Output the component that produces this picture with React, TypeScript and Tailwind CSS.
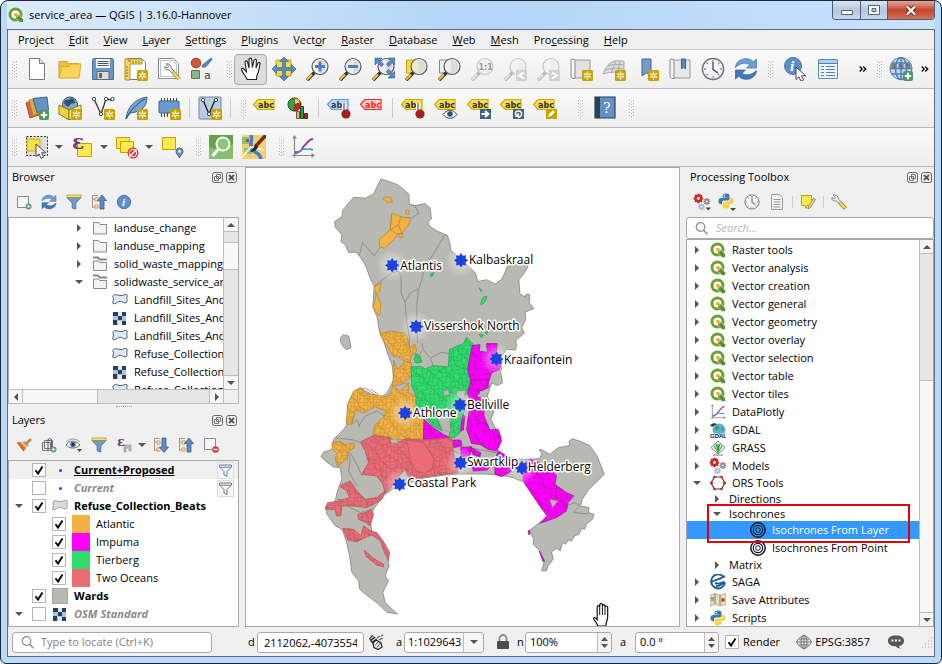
import React from "react";

type Kids = { children?: React.ReactNode };

/* ---------- small building blocks ---------- */

function Svg({ children, size = "w-6 h-6", box = "0 0 24 24" }: Kids & { size?: string; box?: string }) {
  return (
    <svg viewBox={box} className={`${size} shrink-0`} fill="none" aria-hidden="true">
      {children}
    </svg>
  );
}

function Handle({ className = "w-4" }: { className?: string }) {
  return (
    <span className={`flex shrink-0 justify-center ${className}`}>
      <svg viewBox="0 0 5 17" className="h-[17px] w-[5px]" fill="#b4b4b4" aria-hidden="true">
        {[0, 3, 6, 9, 12, 15].map((y) => (
          <g key={y}>
            <rect x="0" y={y} width="1" height="1" />
            <rect x="2" y={y + 1} width="1" height="1" />
            <rect x="4" y={y} width="1" height="1" />
          </g>
        ))}
      </svg>
    </span>
  );
}

function Sep({ className = "w-2 h-5" }: { className?: string }) {
  return (
    <span className={`flex shrink-0 justify-center ${className}`}>
      <span className="h-full w-px bg-[#cfcfcf]" />
    </span>
  );
}

function Tool({ name, children, active = false }: Kids & { name: string; active?: boolean }) {
  return (
    <button
      aria-label={name}
      className={`flex h-[31px] w-[33px] shrink-0 items-center justify-center ${
        active ? "rounded-sm border border-[#a9a9a9] bg-[#dcdcdc]" : ""
      }`}
    >
      {children}
    </button>
  );
}

function Caret() {
  return (
    <button aria-label="More options" className="flex w-3 shrink-0 justify-center">
      <Svg size="w-2 h-2" box="0 0 8 8">
        <path d="M0 2h8L4 6z" fill="#555" />
      </Svg>
    </button>
  );
}

function SmallTool({ name, children }: Kids & { name: string }) {
  return (
    <button aria-label={name} className="flex h-6 w-[25px] shrink-0 items-center justify-center">
      {children}
    </button>
  );
}

/* ---------- icon parts ---------- */

const New = () => (
  <g>
    <rect x="13" y="13" width="11" height="11" rx="1.5" fill="#c8a200" />
    <path d="M18.5 14.5v8M14.9 16.5l7.2 4M14.9 20.5l7.2-4" stroke="#fff" strokeWidth="1.400" />
    <circle cx="18.5" cy="18.5" r="1" fill="#c8a200" />
  </g>
);

const Plus = ({ x = 14, y = 14 }: { x?: number; y?: number }) => (
  <g transform={`translate(${x} ${y})`}>
    <rect width="10" height="10" rx="2" fill="#4e9a5f" />
    <path d="M5 1.800v6.400M1.800 5h6.400" stroke="#fff" strokeWidth="2" />
  </g>
);

function Lens({ children, back, faded = false }: Kids & { back?: React.ReactNode; faded?: boolean }) {
  return (
    <Svg>
      <g opacity={faded ? 0.3 : 1}>
        {back}
        <path d="M9.500 15.500 2 23" stroke="#333" strokeWidth="3.600" />
        <path d="M7 17.500 2 22.600" stroke={faded ? "#bbb" : "#f1c232"} strokeWidth="2.200" />
        <circle cx="15" cy="9.500" r="8" fill="#ececec" fillOpacity=".8" stroke="#5a5a5a" strokeWidth="1.200" />
        <path d="M15 3a6.500 6.500 0 0 1 0 13z" fill="#cfcfcf" opacity=".6" />
      </g>
      {children}
    </Svg>
  );
}

const HandIcon = () => (
  <Svg>
    <path
      d="M8 22.500c0-2-4.500-6.500-5.500-9.500-.4-1.600 1.500-2.200 2.600-.8L7.500 15 6 5.500C5.800 3.700 8 3.300 8.500 5l1.600 6L10 2.500C10 .700 12.500.700 12.700 2.500l.7 8L15 3.300c.4-1.700 2.500-1.300 2.400.4L17 11l1.800-4.600c.7-1.500 2.600-.800 2.200.8-1 4-1 8-3.200 11.500l-.3 3.800z"
      fill="#fff"
      stroke="#222"
      strokeWidth="1.100"
    />
  </Svg>
);

const Refresh = ({ size = "w-6 h-6" }: { size?: string }) => (
  <Svg size={size}>
    <path d="M1.500 10.500C1.500 4.500 8 .500 14.500 2c2 .4 3.500 1.400 4.700 2.700L22.500 2v9h-10l3.500-3.200C12 5 6 6 1.500 10.500z" fill="#6d9fd4" stroke="#3d6fa5" strokeWidth=".7" />
    <path d="M22.500 13.500c0 6-6.500 10-13 8.500-2-.4-3.500-1.400-4.700-2.700L1.500 22v-9h10L8 16.200C12 19 18 18 22.500 13.500z" fill="#4179b8" stroke="#30609a" strokeWidth=".7" />
  </Svg>
);

const Folder = ({ open = false }: { open?: boolean }) => (
  <Svg size="w-4 h-4" box="0 0 16 16">
    {open && <path d="M1 1.500h5l1.500 2H15" stroke="#888" strokeWidth="1.800" />}
    <path d={open ? "M1.500 5h5l1 1.500h7v8h-13z" : "M1.500 2.500h5L8 4.500h6.500v9.500h-13z"} fill="#f3f3f1" stroke="#8b8b8b" />
  </Svg>
);

const PolyIcon = ({ gray = false }: { gray?: boolean }) => (
  <Svg size="w-4 h-4" box="0 0 16 16">
    <path
      d="M1 4C2.500 1.800 5 3 8 3.500s5-1.800 7-.8c.8 1.300-.8 2.800 0 4.800.5 2-.5 4-2 3.500C10.500 10.500 9 8.500 6.500 9.500 5 10.500 3 12.500 1 11.500c-1-2 .8-3 .5-4.500S.500 5 1 4z"
      fill={gray ? "#dcdcdc" : "#dfe8f4"}
      stroke={gray ? "#9a9a9a" : "#4a607c"}
    />
  </Svg>
);

const RasterIcon = () => (
  <Svg size="w-4 h-4" box="0 0 16 16">
    <rect x="1" y="2" width="13" height="13" fill="#a9c3e2" />
    <path d="M1 2h5v4H1zM10 2h4v4h-4zM6 6h4v4H6zM1 10h4v5H1zM10 11h4v4h-4z" fill="#2c3e57" />
    <path d="M6 2h4v4H6zM6 11h4v4H6z" fill="#dce8f6" />
  </Svg>
);

const QLogo = () => (
  <Svg size="w-4 h-4" box="0 0 16 16">
    <circle cx="7.500" cy="7.500" r="5.500" fill="#fff" stroke="#6da033" strokeWidth="3" />
    <path d="M7.800 7.800h3.500l4.200 4.700v3h-3.600L7.800 11.200z" fill="#599032" stroke="#fff" strokeWidth=".6" />
    <path d="m6 6 4 .4-.9 1 1.800 1.800-1.500 1.500-1.800-1.800-1 .9z" fill="#f3a32b" />
  </Svg>
);

const gear = "M8 1v14M1 8h14M3 3l10 10M13 3 3 13";
const Gears = ({ menu = false }: { menu?: boolean }) => (
  <Svg size="w-[18px] h-[18px]" box="0 0 20 20">
    <g transform="scale(.75)" stroke="#cc2a2a" strokeWidth="3">
      <path d={gear} />
      <circle cx="8" cy="8" r="4.500" fill="#cc2a2a" />
    </g>
    <g transform="translate(11 5) scale(.55)" stroke="#8c8c8c" strokeWidth="3">
      <path d={gear} />
      <circle cx="8" cy="8" r="3.500" fill="#eee" />
    </g>
    <g transform="translate(5 11) scale(.55)" stroke="#a8bfe0" strokeWidth="3">
      <path d={gear} />
      <circle cx="8" cy="8" r="3.500" fill="#eee" />
    </g>
    <circle cx="6" cy="6" r="1.500" fill="#fff" />
    {menu && <path d="M14 16h6l-3 3.500z" fill="#444" />}
  </Svg>
);

const Python = ({ menu = false }: { menu?: boolean }) => (
  <Svg size={menu ? "w-[18px] h-[18px]" : "w-4 h-4"} box={menu ? "0 0 18 18" : "0 0 16 16"}>
    <path d="M8 .500C5 .500 4.500 1.500 4.500 3v1.500h4V5H3C1.500 5 .500 6 .500 8.200.500 10.500 1.500 11.200 3 11.200h1V9.500C4 8 5 7.500 6.500 7.500h3.300c1 0 1.700-.7 1.700-1.700V3c0-1.700-1-2.500-3.500-2.500z" fill="#3c78ab" />
    <path d="M8 15.500c3 0 3.500-1 3.500-2.500v-1.500h-4V11H13c1.500 0 2.500-1 2.500-3.200 0-2.300-1-3-2.500-3h-1v1.700c0 1.500-1 2-2.500 2H6.200c-1 0-1.700.7-1.700 1.700V13c0 1.700 1 2.500 3.500 2.500z" fill="#fcd24c" />
    <circle cx="6.300" cy="2.600" r=".8" fill="#fff" />
    {menu && <path d="M12 15h6l-3 3z" fill="#444" />}
  </Svg>
);

const Funnel = () => (
  <Svg size="w-4 h-4" box="0 0 16 16">
    <path d="M1 3.500h14L9.800 9v6l-3.600-1V9z" fill="#6f9ccc" stroke="#41658d" strokeWidth=".8" />
    <rect x="1" y="1" width="14" height="2.500" fill="#fce94f" stroke="#8b8440" strokeWidth=".6" />
  </Svg>
);

const Tree = ({ up = false }: { up?: boolean }) => (
  <Svg size="w-4 h-4" box="0 0 16 16">
    <path d="M1.500 2v12M1.500 5h3M1.500 13h3M1 1.500h6" stroke="#999" />
    <path d="M4 4h3v3H4zM4 11h3v3H4z" fill="#fff" stroke="#f08a24" />
    <path d={up ? "M11 1l4.500 5.500H13V15H9V6.500H6.500z" : "M11 15.500 6.500 10H9V1h4v9h2.500z"} fill="#5c8cc2" stroke="#35608f" strokeWidth=".8" />
  </Svg>
);

const Info = () => (
  <Svg size="w-4 h-4" box="0 0 16 16">
    <circle cx="8" cy="8" r="6.700" fill="#5f8fc8" stroke="#4a78ae" />
    <text x="6" y="12" fontSize="11" fontStyle="italic" fontWeight="700" fill="#fff" className="font-['Liberation_Serif',serif]">i</text>
  </Svg>
);

const Clock = ({ size = "w-6 h-6" }: { size?: string }) => (
  <Svg size={size}>
    <circle cx="12" cy="12" r="10.600" fill="#f6f6f6" stroke="#777" strokeWidth="1.500" />
    <path d="M12 3v2M12 19v2M3 12h2M19 12h2M5.600 5.600 7 7M17 17l1.400 1.400M5.600 18.400 7 17M17 7l1.400-1.400" stroke="#6a93c0" strokeWidth="1.300" />
    <path d="M12 5v7.500l5 3.500" stroke="#666" strokeWidth="1.600" />
  </Svg>
);

const Wrench = () => (
  <Svg size="w-4 h-4" box="0 0 16 16">
    <path d="M2 .8 4.500 3.200 3.500 4.800.900 3.500C.300 6 2.500 7.500 5 6.800L7.500 9 9.500 7.200 7.300 5C7.500 2.500 5 .3 2 .8z" fill="#eee" stroke="#777" strokeWidth=".8" />
    <path d="m8.500 8 6 6.500" stroke="#8e7a20" strokeWidth="4" />
    <path d="m8.500 8 5.700 6.200" stroke="#f2d760" strokeWidth="2.500" />
  </Svg>
);

const Plot = ({ size = "w-6 h-6" }: { size?: string }) => (
  <Svg size={size}>
    <path d="M3.500 1v21.500M1 20.500h22M1.800 3.500 3.500 1l1.700 2.500M20.500 18.800l2.500 1.700-2.500 1.700" stroke="#888" strokeWidth="1.200" />
    <path d="M4 17c8 1 6-4 10-7 3-3 4-6 8-6" stroke="#b0309a" strokeWidth="1.800" />
    <path d="M4 19c5-1 6-6 10-5s5-1 8 1" stroke="#4a9ab5" strokeWidth="1.600" />
  </Svg>
);

const Rings = () => (
  <Svg size="w-4 h-4" box="0 0 16 16">
    <circle cx="8" cy="8" r="7.200" stroke="#0b1a2a" strokeWidth="1.500" />
    <circle cx="8" cy="8" r="4.700" stroke="#0b1a2a" strokeWidth="1.200" />
    <circle cx="8" cy="8" r="2.300" stroke="#0b1a2a" strokeWidth="1" />
  </Svg>
);

function Tag({ color = "yellow", text = "abc", children }: Kids & { color?: string; text?: string }) {
  const fill = color === "blue" ? "#bcd9fb" : color === "red" ? "#ffd5d5" : "#f4de4c";
  const stroke = color === "blue" ? "#5c9be8" : color === "red" ? "#f22" : "#c9a90c";
  return (
    <Svg>
      <path d="M.500 8.500 5 3.500h16v10H5z" fill={fill} stroke={stroke} strokeWidth="1.200" />
      <text x={text === "ab" ? 4 : 5} y="11.500" fontSize="8" fontWeight="700" fill={color === "red" ? "#f22" : "#333"} className="font-['DejaVu_Sans']">
        {text}
      </text>
      {children}
    </Svg>
  );
}

const Pin = () => (
  <g>
    <path d="M17 7v8" stroke="#fff" strokeWidth="4" />
    <path d="M17 7v9" stroke="#777" strokeWidth="1.500" />
    <circle cx="19" cy="18" r="4.600" fill="#a32121" />
  </g>
);

const Globe = () => (
  <g>
    <circle cx="12" cy="11.500" r="11" fill="#c3d6ea" stroke="#777" />
    <path d="M2.500 7h5v4h-5zM9.500 7h5v4h-5zM16.500 7h5v4h-5z" fill="#777" />
    <path d="M12 1v21M1 11.500h22M3 6h18M3 17h18" stroke="#4b7fb8" strokeWidth="1.500" />
    <ellipse cx="12" cy="11.500" rx="5.500" ry="11" stroke="#4b7fb8" strokeWidth="1.500" />
  </g>
);

const Cursor = ({ x = 11, y = 9 }: { x?: number; y?: number }) => (
  <path d="M0 0v12.500l3-2.800 2 4.600 2.500-1.200-2-4.300h4.200z" transform={`translate(${x} ${y})`} fill="#fff" stroke="#333" strokeWidth=".9" />
);

const Chevrons = () => (
  <Svg size="w-2 h-2" box="0 0 8 8">
    <path d="m.7 1.500 2.500 2.500L.7 6.500M4.200 1.500 6.700 4 4.200 6.500" stroke="#000" strokeWidth="1.300" />
  </Svg>
);

/* ---------- toolbars ---------- */

const bar = "flex h-[39px] shrink-0 items-center overflow-hidden border-b border-[#b9b9b9] bg-linear-to-b from-[#fafafa] to-[#eeeeee]";

function ProjectBar() {
  return (
    <div className={bar} role="toolbar" aria-label="Project and navigation">
      <Handle className="w-3" />
      <Tool name="New project"><Svg><path d="M4.500 1.500h10l5 5v16h-15z" fill="#fff" stroke="#777" /><path d="M14.500 1.500v5h5" fill="#ddd" stroke="#777" /></Svg></Tool>
      <Tool name="Open project"><Svg><path d="M1 21V4.500h8l2 2h10V10" fill="#edc13c" stroke="#d6a52c" /><path d="M1 21 4 9.500h7L13 7h10l-2 14z" fill="#fbd45a" stroke="#dba92e" /></Svg></Tool>
      <Tool name="Save project">
        <Svg><path d="M2.500 1.500h19l1 1v20h-21v-20z" fill="#6b97c6" stroke="#486f9b" /><path d="M5 2h14v9H5z" fill="#f5f5f5" /><path d="M6.500 4.500h11M6.500 6.500h11M6.500 8.500h11" stroke="#555" /><path d="M6 14.500h12v8H6z" fill="#d9d9d9" stroke="#666" /><path d="M8 16h3v5H8z" fill="#486f9b" /></Svg>
      </Tool>
      <Tool name="New print layout">
        <Svg><path d="M3.500 1.500h14l4 4v17h-18z" fill="#fff" stroke="#777" /><path d="M1 2h17v5H6v16H1z" fill="#f5d76e" stroke="#b4901c" /><path d="M4 4h3M9 4v2M12 4v2M15 4v2M2 10h2M2 13h2M2 16h2M2 19h2" stroke="#8a6e10" /><New /></Svg>
      </Tool>
      <Tool name="Layout manager">
        <Svg><path d="M1.500 1.500h15l5 5v15h-20z" fill="#fff" stroke="#888" /><path d="M3.500 3.500h12l4 4v12h-16z" stroke="#a8c4e6" /><g transform="translate(7 6)"><path d="M2 .8 4.500 3.200 3.500 4.800.900 3.500C.300 6 2.500 7.500 5 6.800L8 10 10 8 7.300 5C7.500 2.500 5 .3 2 .8z" fill="#eee" stroke="#777" /><path d="m9 9 6 7" stroke="#bb9a21" strokeWidth="4" /><path d="m9 9 6 7" stroke="#f2d760" strokeWidth="2" /></g></Svg>
      </Tool>
      <Tool name="Style manager">
        <Svg><circle cx="6" cy="6" r="4.800" fill="#cd5a36" stroke="#a34020" /><path d="M12 10c0-3 2-3 3-4l6-5 1 1.500-5 6c-1 1.500-3 2-5 1.500z" fill="#5b87b9" stroke="#395e88" strokeWidth=".7" /><path d="M1.500 13.500h8v8h-8z" fill="#8db38a" stroke="#4c8051" /><text x="14" y="22" fontSize="11" fill="#444" className="font-['DejaVu_Sans']">a</text></Svg>
      </Tool>
      <Handle className="w-4 pl-[6px]" />
      <Tool name="Pan map" active><HandIcon /></Tool>
      <Tool name="Pan to selection">
        <Svg><path d="M4 3h15v16H4z" fill="#f5dc45" stroke="#c3a41e" /><path d="m12 0 4.500 4.500h-3v6h6v-3L24 12l-4.500 4.500v-3h-6v6h3L12 24l-4.500-4.500h3v-6h-6v3L0 12l4.500-4.500v3h6v-6h-3z" fill="#5a8abf" stroke="#325c8c" strokeWidth=".6" /></Svg>
      </Tool>
      <Tool name="Zoom in"><Lens><path d="M15 4.500v10M10 9.500h10" stroke="#4f80b5" strokeWidth="3" /></Lens></Tool>
      <Tool name="Zoom out"><Lens><path d="M10 9.500h10" stroke="#4f80b5" strokeWidth="3" /></Lens></Tool>
      <Tool name="Zoom full">
        <Lens><path d="M4 1h7L8.700 3.300l4 4-2.400 2.400-4-4L4 8zM24 1v7l-2.300-2.300-4 4-2.400-2.400 4-4L17 1zM24 21h-7l2.300-2.300-4-4 2.400-2.400 4 4L24 14z" fill="#5a8abf" stroke="#35608f" strokeWidth=".6" /></Lens>
      </Tool>
      <Tool name="Zoom to selection"><Lens back={<path d="M2.500 3h12v13h-12z" fill="#f5dc45" stroke="#c3a41e" />} /></Tool>
      <Tool name="Zoom to layer"><Lens back={<path d="M2.500 3h12v13h-12z" fill="#eee" stroke="#888" />} /></Tool>
      <Tool name="Zoom to native resolution"><Lens faded><text x="8.500" y="13" fontSize="8" fontWeight="700" fill="#999" className="font-['DejaVu_Sans']">1:1</text></Lens></Tool>
      <Tool name="Zoom last"><Lens faded><path d="M13 13h11v11H13z" fill="#cfd2d4" /><path d="m21 15.500-5 3 5 3" stroke="#fff" strokeWidth="2" /></Lens></Tool>
      <Tool name="Zoom next"><Lens faded><path d="M13 13h11v11H13z" fill="#cfd2d4" /><path d="m16 15.500 5 3-5 3" stroke="#fff" strokeWidth="2" /></Lens></Tool>
      <Tool name="New map view"><Svg><path d="M5 3h16v18H5z" fill="#e2e2e2" stroke="#999" /><path d="M2 2.500c3-1 4 0 4 2v17H4c-1 0-2-1-2-3z" fill="#f4f4f4" stroke="#888" /><New /></Svg></Tool>
      <Tool name="New 3D map view"><Svg><path d="M10 5c4-2 7-1 12-1v13c-8-3-14-2-21 0 2-5 4-9 9-12z" fill="#ddd" stroke="#aaa" /><path d="M6 9c5-2 10-2 16-1M3 13c6-2 12-2 19-1M14 4 9 16M18 4l-2 12" stroke="#aaa" /><New /></Svg></Tool>
      <Tool name="New spatial bookmark"><Svg><path d="M7 2h9v17l-4.500-3L7 19z" fill="#6f9ccc" stroke="#41658d" /><New /></Svg></Tool>
      <Tool name="Show bookmarks"><Svg><path d="M5 3h17v18H5z" fill="#e8e8e8" stroke="#999" /><path d="M2 2.500c3-1 4 0 4 2v17H4c-1 0-2-1-2-3z" fill="#f4f4f4" stroke="#888" /><path d="M13.500 2h4v10l-2-2-2 2z" fill="#5a8abf" stroke="#35608f" /></Svg></Tool>
      <Tool name="Temporal controller"><Clock /></Tool>
      <Tool name="Refresh"><Refresh /></Tool>
      <Handle />
      <Tool name="Identify features"><Svg><circle cx="10" cy="9" r="8.500" fill="#5f8fc8" stroke="#4a78ae" /><text x="7" y="14" fontSize="15" fontStyle="italic" fontWeight="700" fill="#fff" className="font-['Liberation_Serif',serif]">i</text><Cursor x={13} y={10} /></Svg></Tool>
      <Tool name="Open attribute table"><Svg><path d="M2.500 2.500h19v19h-19z" fill="#eef4fb" stroke="#5a8abf" /><path d="M3 3h18v3.500H3z" fill="#a9d0f5" /><path d="M5 9.500h3M10 9.500h9M5 12.500h3M10 12.500h9M5 15.500h3M10 15.500h9M5 18.500h3M10 18.500h9M3 6.500h18" stroke="#4f7fb3" /></Svg></Tool>
      <button aria-label="More tools" className="ml-[10px] flex w-[18px] shrink-0 justify-center"><Chevrons /></button>
      <Handle className="w-[14px]" />
      <button aria-label="Add web layer" className="flex w-[30px] shrink-0 justify-center"><Svg><Globe /><Plus x={14} y={14} /></Svg></button>
      <button aria-label="More layers" className="flex w-[18px] shrink-0 justify-center"><Chevrons /></button>
    </div>
  );
}

function LayerBar() {
  return (
    <div className={bar} role="toolbar" aria-label="Data sources and labels">
      <Handle className="w-3" />
      <Tool name="Data source manager"><Svg><path d="m1 7 7-3 6 15-9 3z" fill="#d8683a" stroke="#8f3c1a" strokeWidth=".8" /><path d="m4 4 9-2 5 14-10 4z" fill="#e0a83c" stroke="#a67c1c" strokeWidth=".8" /><path d="m8 2.500 14-1.500 1.500 13L12 16.500z" fill="#6492c6" stroke="#3d668f" /><Plus /></Svg></Tool>
      <Tool name="New geopackage layer"><Svg><circle cx="12" cy="8.500" r="7.500" fill="#7fa8d4" stroke="#36506f" /><path d="M6 6c2-4 5-1 6-3s5 0 5 3-4 0-5 3-6 0-6-3z" fill="#31506f" /><path d="M1 9v9l10 6V14z" fill="#f2d33a" stroke="#8b7412" /><path d="M23 9v9l-12 6V14z" fill="#fff07a" stroke="#8b7412" /><New /></Svg></Tool>
      <Tool name="New shapefile layer"><Svg><path d="m3 3 7 15 5-15 6 1" stroke="#333" strokeWidth="1.300" /><g fill="#fff" stroke="#444"><circle cx="3" cy="3" r="1.700" /><circle cx="10" cy="18" r="1.700" /><circle cx="15" cy="3" r="1.700" /><circle cx="21.500" cy="3" r="1.700" /></g><New /></Svg></Tool>
      <Tool name="New SpatiaLite layer"><Svg><path d="M2 23C3 12 10 3 23 1c0 9-5 15-17 16z" fill="#7ba6d4" stroke="#3d668f" /><path d="M2 23C6 15 12 8 21 3" stroke="#244a70" /><New /></Svg></Tool>
      <Tool name="New temporary scratch layer"><Svg><path d="M4.500 2v19M7.500 2v19M10.500 2v19M13.500 2v19M16.500 2v19M19.500 2v19" stroke="#444" /><rect x="2" y="5" width="20" height="12" rx="1" fill="#6d9ace" stroke="#3b6594" /><New /></Svg></Tool>
      <Sep />
      <Tool name="New virtual layer"><Svg><rect x="1" y="1" width="22" height="22" rx="1" fill="#b8cce3" stroke="#6d87a6" /><path d="m5 4 6 14 6-14" stroke="#222" strokeWidth="1.400" /><g fill="#fff" stroke="#444"><circle cx="5" cy="4" r="1.700" /><circle cx="11" cy="18" r="1.700" /><circle cx="18" cy="4" r="1.700" /></g><New /></Svg></Tool>
      <Sep />
      <Handle className="w-[14px] pl-1" />
      <Tool name="Layer labeling"><Tag /></Tool>
      <Tool name="Layer diagrams"><Svg><circle cx="8.500" cy="8.500" r="6.500" fill="#31a54a" stroke="#2b4a20" /><path d="M8.500 8.500V2a6.500 6.500 0 0 1 6 5z" fill="#f5d23c" stroke="#544" strokeWidth=".7" /><path d="M8.500 8.500 14.700 7a6.500 6.500 0 0 1-7.200 8z" fill="#d3201f" stroke="#544" strokeWidth=".7" /><path d="M10.500 15.500h3v7h-3z" fill="#f0b42a" stroke="#654" /><path d="M14.500 10.500h3v12h-3z" fill="#21a544" stroke="#242" /><path d="M18.500 17.500h3v5h-3z" fill="#c22" stroke="#522" /></Svg></Tool>
      <Sep />
      <Tool name="Highlight pinned labels"><Tag color="blue" text="ab"><Pin /></Tag></Tool>
      <Tool name="Toggle unplaced labels"><Tag color="red" /></Tool>
      <Sep />
      <Tool name="Pin labels"><Tag text="ab"><Pin /></Tag></Tool>
      <Tool name="Show and hide labels"><Tag><path d="M9 18.500c4-5.500 10-5.500 14 0-4 5-10 5-14 0z" fill="#fff" stroke="#445" /><circle cx="16" cy="18" r="2.800" fill="#31557c" /></Tag></Tool>
      <Tool name="Move label"><Tag><path d="M13 13h11v10H13z" fill="#41627f" /><path d="M14.500 18h6M18 15l3.500 3-3.500 3" stroke="#fff" strokeWidth="2" /></Tag></Tool>
      <Tool name="Rotate label"><Tag><path d="M13 13h11v10H13z" fill="#41627f" /><path d="M18 21.500c5-1 4.500-6.500.5-6.500s-4 4-1 4.500M18 17l.5 3-3 .5" stroke="#fff" strokeWidth="1.400" /></Tag></Tool>
      <Tool name="Change label"><Tag><path d="M13 13h11v10H13z" fill="#c8a200" /><path d="m15 21 1-3 4-4 2 2-4 4z" fill="#fff" /></Tag></Tool>
      <Handle className="ml-3 w-[15px]" />
      <Tool name="Help"><Svg><path d="M2 1h20v21H2z" fill="#6290c4" stroke="#2b3f57" strokeWidth="1.200" /><path d="M2 1h5v21H2z" fill="#2b3f57" /><text x="10" y="17" fontSize="14" fill="#fff" className="font-['DejaVu_Serif']">?</text></Svg></Tool>
      <Handle className="w-5" />
    </div>
  );
}

function SelectionBar() {
  return (
    <div className={bar} role="toolbar" aria-label="Selection and plugins">
      <Handle className="w-3" />
      <Tool name="Select features"><Svg><path d="M1.500 1.500h21v19h-21z" fill="#ddd" stroke="#333" strokeDasharray="2 1.500" /><path d="M2 4h13v12H2z" fill="#f9e04a" stroke="#cbaa1c" /><Cursor x={11} y={9} /></Svg></Tool>
      <Caret />
      <Tool name="Select by expression"><Svg><path d="M7.500 8.500h14v13h-14z" fill="#fce94f" stroke="#c4a000" /><text x="2" y="14" fontSize="20" fontWeight="700" fill="#6b3f76" className="font-['DejaVu_Serif',serif]">ε</text></Svg></Tool>
      <Caret />
      <Tool name="Deselect features"><Svg><path d="M1.500 2.500h13v11h-13z" fill="#fce94f" stroke="#c4a000" /><path d="M5.500 6.500h13v11h-13z" fill="#fce94f" stroke="#c4a000" /><circle cx="18" cy="18" r="5.500" fill="#d33" /><path d="m14.500 21.500 7-7" stroke="#fff" strokeWidth="1.600" /><circle cx="18" cy="18" r="3.700" stroke="#fff" /></Svg></Tool>
      <Caret />
      <Tool name="Select by location"><Svg><path d="M2.500 2.500h13v12h-13z" fill="#fce94f" stroke="#c4a000" /><path d="M19.500 23c-1-3-3.500-4-3.500-6.500a3.500 3.500 0 0 1 7 0c0 2.500-2.500 3.500-3.500 6.500z" fill="#6f93b4" stroke="#48637f" /><circle cx="19.500" cy="16.500" r="1.200" fill="#fff" /></Svg></Tool>
      <Handle className="w-4 pl-[5px]" />
      <Tool name="Search layers"><Svg><path d="M0 0h24v24H0z" fill="#61a548" /><path d="M0 12C8 16 18 14 24 9v15H0z" fill="#86c06e" /><circle cx="14" cy="9" r="6.500" fill="#8cc47a" stroke="#fff" strokeWidth="2" /><path d="m9.500 14-6 7" stroke="#fff" strokeWidth="3" /></Svg></Tool>
      <Tool name="Quick OSM"><Svg><path d="M0 0h24v24H0z" fill="#f5cf6e" /><path d="M0 2h7v7H0zM2 13h8v6H2z" fill="#8cc06c" /><path d="M9 0c2 6-2 9 1 14s8 3 9 10" stroke="#3a7fd0" strokeWidth="3.500" /><path d="M0 22 9 12l13 3" stroke="#f7f2d0" strokeWidth="2" /><path d="M4 4h3v3H4z" fill="#d4356a" /><path d="M24 0 13 12" stroke="#6e3013" strokeWidth="3.500" /><path d="m14 10-6 7c3 0 6-1 8-5z" fill="#222" /></Svg></Tool>
      <Handle className="w-4 pl-[6px]" />
      <Tool name="DataPlotly"><Plot /></Tool>
    </div>
  );
}

/* ---------- docks ---------- */

function DockTitle({ title }: { title: string }) {
  return (
    <div className="flex h-5 shrink-0 items-center gap-[3px] pr-[2px] pl-1">
      <h2 className="mr-auto whitespace-nowrap">{title}</h2>
      <button aria-label={`Float ${title}`}>
        <Svg size="w-[11px] h-[11px]" box="0 0 11 11">
          <rect x=".5" y=".5" width="10" height="10" rx="2" stroke="#666" />
          <path d="M4.500 2.500h4v4h-4zM2.500 4.500h4v4h-4z" fill="#f0f0f0" stroke="#666" strokeWidth=".9" />
        </Svg>
      </button>
      <button aria-label={`Close ${title}`}>
        <Svg size="w-[11px] h-[11px]" box="0 0 11 11">
          <rect x=".5" y=".5" width="10" height="10" rx="2" stroke="#666" />
          <path d="m3 3 5 5M8 3 3 8" stroke="#555" strokeWidth="1.800" />
        </Svg>
      </button>
    </div>
  );
}

function Arrow({ open = false }: { open?: boolean }) {
  return (
    <Svg size="w-2 h-2" box="0 0 8 8">
      <path d={open ? "M0 2h8L4 6z" : "M2 0v8l4-4z"} fill="#555" />
    </Svg>
  );
}

function ScrollEnd({ dir, className }: { dir: "up" | "down" | "left" | "right"; className: string }) {
  const d = { up: "M0 6h8L4 2z", down: "M0 2h8L4 6z", left: "M6 0v8L2 4z", right: "M2 0v8l4-4z" }[dir];
  return (
    <button aria-label={`Scroll ${dir}`} className={`flex shrink-0 items-center justify-center border-[#bcbcbc] bg-[#f5f5f5] ${className}`}>
      <Svg size="w-2 h-2" box="0 0 8 8"><path d={d} fill="#555" /></Svg>
    </button>
  );
}

const browserRows: { label: string; kind: "folder" | "open" | "poly" | "raster"; arrow?: boolean; open?: boolean }[] = [
  { label: "landuse_change", kind: "folder", arrow: true },
  { label: "landuse_mapping", kind: "folder", arrow: true },
  { label: "solid_waste_mapping", kind: "open", arrow: true },
  { label: "solidwaste_service_area", kind: "open", arrow: true, open: true },
  { label: "Landfill_Sites_And_Drop", kind: "poly" },
  { label: "Landfill_Sites_And_Drop", kind: "raster" },
  { label: "Landfill_Sites_And_Drop", kind: "poly" },
  { label: "Refuse_Collection_Beats", kind: "poly" },
  { label: "Refuse_Collection_Beats", kind: "raster" },
  { label: "Refuse_Collection_Beats", kind: "poly" },
];

const dockTools = "flex h-[30px] shrink-0 items-center pl-[3px]";

function Browser() {
  return (
    <section className="flex min-h-0 shrink-0 flex-col">
      <DockTitle title="Browser" />
      <div className={dockTools} role="toolbar" aria-label="Browser tools">
        <SmallTool name="Add layer"><Svg size="w-4 h-4" box="0 0 16 16"><path d="M1.500 2.500h11v11h-11z" fill="#f5f5f5" stroke="#888" /><circle cx="12.500" cy="12.500" r="3" fill="#5da56c" /><path d="M12.500 11v3M11 12.500h3" stroke="#fff" /></Svg></SmallTool>
        <SmallTool name="Refresh browser"><Refresh size="w-4 h-4" /></SmallTool>
        <SmallTool name="Filter browser"><Funnel /></SmallTool>
        <SmallTool name="Collapse all"><Tree up /></SmallTool>
        <SmallTool name="Properties"><Info /></SmallTool>
      </div>
      <div className="flex h-[172px] border border-b-0 border-[#a9a9a9] bg-white">
        <ul className="min-w-0 flex-1 overflow-hidden pt-px">
          {browserRows.map((r, i) => (
            <li key={i} className={`flex h-[18px] items-center whitespace-nowrap ${r.arrow ? "pl-[66px]" : "pl-[103px]"}`}>
              {r.arrow && <span className="flex w-[17px] shrink-0"><Arrow open={r.open} /></span>}
              {r.kind === "poly" ? <PolyIcon /> : r.kind === "raster" ? <RasterIcon /> : <Folder open={r.kind === "open"} />}
              <span className="ml-[6px]">{r.label}</span>
            </li>
          ))}
        </ul>
        <div className="flex w-[15px] shrink-0 flex-col border-l border-[#bcbcbc] bg-[#e6e6e6]">
          <ScrollEnd dir="up" className="h-[14px] border-b" />
          <div className="mt-[10px] h-[28px] border-y border-[#bcbcbc] bg-[#f8f8f8]" />
          <ScrollEnd dir="down" className="mt-auto h-[14px] border-t" />
        </div>
      </div>
      <div className="flex h-[15px] border border-[#bcbcbc] bg-[#e6e6e6]">
        <ScrollEnd dir="left" className="w-[14px] border-r" />
        <div className="w-[75px] border-r border-[#bcbcbc] bg-[#f8f8f8]" />
        <ScrollEnd dir="right" className="ml-auto w-[14px] border-l" />
        <span className="w-[15px] border-l border-[#bcbcbc] bg-[#f0f0f0]" />
      </div>
    </section>
  );
}

function Check({ label, on = false }: { label: string; on?: boolean }) {
  return (
    <span className="grid h-[14px] w-[14px] shrink-0">
      <input type="checkbox" aria-label={label} defaultChecked={on} className="peer h-[14px] w-[14px] appearance-none border border-[#b5b5b5] bg-white [grid-area:1/1]" />
      <svg viewBox="0 0 14 14" className="pointer-events-none hidden h-[14px] w-[14px] [grid-area:1/1] peer-checked:block" fill="none" aria-hidden="true">
        <path d="M3.500 7.200 6 10.500 10.500 3.500" stroke="#000" strokeWidth="1.900" />
      </svg>
    </span>
  );
}

function LayerRow({ label, on, arrow, indent = false, style = "", icon, filter, shade = false }: {
  label: string; on: boolean; arrow?: boolean; indent?: boolean; style?: string; icon: React.ReactNode; filter?: string; shade?: boolean;
}) {
  return (
    <li className={`flex h-[18px] items-center whitespace-nowrap pr-1 ${shade ? "bg-[#f0f0f0]" : ""} ${indent ? "pl-[43px]" : "pl-[6px]"}`}>
      {!indent && <span className="flex w-[17px]">{arrow && <Arrow open />}</span>}
      <Check label={label} on={on} />
      <span className={`flex w-[18px] shrink-0 items-center justify-center ${indent ? "mx-[6px]" : "mx-[5px]"}`}>{icon}</span>
      <span className={`mr-auto ${style}`}>{label}</span>
      {filter && (
        <button aria-label={`Filter ${label}`} className="flex h-[17px] w-[17px] items-center justify-center border border-[#ddd] bg-[#f5f5f5]">
          <Svg size="w-[13px] h-[13px]" box="0 0 13 13"><path d="M.500 1h12v2L8 7.500v5L5 11V7.500L.500 3zM1 3.200h11" stroke={filter} /></Svg>
        </button>
      )}
    </li>
  );
}

const dot = <span className="h-[3px] w-[3px] rounded-full bg-[#2347e0]" />;

function Layers() {
  return (
    <section className="flex min-h-0 flex-1 flex-col">
      <DockTitle title="Layers" />
      <div className={dockTools} role="toolbar" aria-label="Layer tools">
        <SmallTool name="Layer styling"><Svg size="w-4 h-4" box="0 0 16 16"><path d="m10 7 5-5" stroke="#c98a35" strokeWidth="2.500" /><path d="M1 5.500 7 5l4 4-3.500 5z" fill="#f3c64a" stroke="#c9982c" strokeWidth=".6" /><path d="m1 6 2.500-1 6 6-2 3.500z" fill="#e0603c" /><path d="m7 5 2-1 4 4-2 1.500z" fill="#8fa0c8" /></Svg></SmallTool>
        <SmallTool name="Add group"><Svg size="w-4 h-4" box="0 0 16 16"><path d="M1.500 5.500h8v8h-8zM3.500 3.500h8v8h-8z" fill="#eee" stroke="#777" /><path d="M7 13V2.500q2-2 3.500 0V12" stroke="#558" /><circle cx="12.500" cy="12.500" r="3" fill="#5da56c" /><path d="M12.500 11v3M11 12.500h3" stroke="#fff" /></Svg></SmallTool>
        <SmallTool name="Map themes"><Svg size="w-[18px] h-4" box="0 0 18 16"><path d="M1 8C4 3 11 3 15 8c-4 4-10 4-14 0z" fill="#fff" stroke="#666" /><path d="M1 5C5 1 11 1 15 5" stroke="#999" /><circle cx="8" cy="7.500" r="2.800" fill="#4272a8" /><circle cx="8" cy="7.500" r="1.200" fill="#123" /><path d="M12 12h5l-2.500 3z" fill="#444" /></Svg></SmallTool>
        <SmallTool name="Filter legend"><Funnel /></SmallTool>
        <SmallTool name="Filter by expression"><Svg size="w-4 h-4" box="0 0 16 16"><text x="1" y="9" fontSize="13" fontWeight="700" fill="#6b3f76" className="font-['DejaVu_Serif',serif]">ε</text><path d="M8 8h7v6h-2v-3h-3v4H8z" fill="#bbb" stroke="#999" strokeWidth=".7" /></Svg></SmallTool>
        <Caret />
        <SmallTool name="Expand all"><Tree /></SmallTool>
        <SmallTool name="Collapse layers"><Tree up /></SmallTool>
        <SmallTool name="Remove layer"><Svg size="w-4 h-4" box="0 0 16 16"><path d="M1.500 1.500h11v11h-11z" fill="#f5f5f5" stroke="#888" /><circle cx="12.500" cy="12.500" r="3.300" fill="#dc3a3a" /><path d="M10.500 12.500h4" stroke="#fff" strokeWidth="1.400" /></Svg></SmallTool>
      </div>
      <ul className="min-h-0 flex-1 overflow-hidden border border-[#a9a9a9] bg-white">
        <LayerRow label="Current+Proposed" on style="font-bold underline" icon={dot} filter="#5c7fa8" shade />
        <LayerRow label="Current" on={false} style="font-bold italic text-[#8a8a8a]" icon={dot} filter="#777" />
        <LayerRow label="Refuse_Collection_Beats" on arrow style="font-bold" icon={<PolyIcon gray />} />
        <LayerRow label="Atlantic" on indent icon={<span className="h-[18px] w-[18px] bg-[#f2b142]" />} />
        <LayerRow label="Impuma" on indent icon={<span className="h-[18px] w-[18px] bg-[#ff00ff]" />} />
        <LayerRow label="Tierberg" on indent icon={<span className="h-[18px] w-[18px] bg-[#2edb6c]" />} />
        <LayerRow label="Two Oceans" on indent icon={<span className="h-[18px] w-[18px] bg-[#ed6b75]" />} />
        <LayerRow label="Wards" on style="font-bold" icon={<span className="h-4 w-4 border border-[#a5a69f] bg-[#b8b9b2]" />} />
        <LayerRow label="OSM Standard" on={false} arrow style="font-bold italic text-[#8a8a8a]" icon={<RasterIcon />} />
      </ul>
    </section>
  );
}

const Gdal = () => (
  <Svg size="w-4 h-4" box="0 0 16 16">
    <circle cx="9" cy="8" r="6.500" fill="#5ab0e0" />
    <path d="M5 5c3-3 5 0 4 2S5 9 5 5zM11 4l3 3-2 2z" fill="#4a9d4c" />
    <path d="M0 3l4-2 3 1-5 3z" fill="#333" />
    <text x="0" y="15.500" fontSize="6" fontWeight="700" fill="#111" stroke="#fff" strokeWidth="1" paintOrder="stroke" className="font-['Liberation_Sans_Narrow','Liberation_Sans',sans-serif]">GDAL</text>
  </Svg>
);
const Grass = () => (
  <Svg size="w-4 h-4" box="0 0 16 16"><path d="m8 1 7 6.500L8 14 1 7.500z" fill="#f5f5f5" stroke="#777" /><path d="M8 13V4M8 12 4 6M8 12l4-6M8 10 6 4M8 10l2-6" stroke="#36a844" strokeWidth="1.300" /><path d="M3 15h10" stroke="#777" /></Svg>
);
const Ors = () => (
  <Svg size="w-4 h-4" box="0 0 16 16"><path d="M4.500 2h7L15 8l-3.500 6h-7L1 8z" stroke="#444" strokeWidth="1.200" /><g fill="#e01b1b"><circle cx="4.500" cy="2" r="1.300" /><circle cx="11.500" cy="2" r="1.300" /><circle cx="14.500" cy="8" r="1.500" /><circle cx="11.500" cy="14" r="1.300" /><circle cx="4.500" cy="14" r="1.300" /><circle cx="1.500" cy="8" r="1.500" /></g></Svg>
);
const Saga = () => (
  <Svg size="w-4 h-4" box="0 0 16 16"><path d="M14 3.500A7 7 0 1 0 15 9M1 8.500C5 5 8 7 15 2M6 12c4 1 5-2 9-4M5 9c3 1 3 1 9-1" stroke="#1d5a94" strokeWidth="1.900" /></Svg>
);
const SaveAttr = () => (
  <Svg size="w-4 h-4" box="0 0 16 16"><path d="m0 3 5-1.500 5 1.500 6-1.500v11L10 14l-5-1.500L0 14z" fill="#e3dcc4" stroke="#a99a78" strokeWidth=".7" /><path d="M5 2v10M10 3v10" stroke="#8b7c5c" /><path d="M1 5h3v4H1z" fill="#8fb083" /><path d="M11 6h4v4h-4z" fill="#d9a04a" /><circle cx="13" cy="8" r="1.300" fill="#c33" /></Svg>
);

type ToolNode = { label: string; level: 0 | 1 | 2; icon?: React.ReactNode; open?: boolean; h?: string; selected?: boolean };
const toolNodes: ToolNode[] = [
  ...["Raster tools", "Vector analysis", "Vector creation", "Vector general", "Vector geometry", "Vector overlay", "Vector selection", "Vector table", "Vector tiles"].map(
    (label): ToolNode => ({ label, level: 0, icon: <QLogo /> }),
  ),
  { label: "DataPlotly", level: 0, icon: <Plot size="w-4 h-4" /> },
  { label: "GDAL", level: 0, icon: <Gdal /> },
  { label: "GRASS", level: 0, icon: <Grass /> },
  { label: "Models", level: 0, icon: <Gears /> },
  { label: "ORS Tools", level: 0, icon: <Ors />, open: true, h: "h-4" },
  { label: "Directions", level: 1, h: "h-4" },
];
const isoNodes: ToolNode[] = [
  { label: "Isochrones", level: 1, open: true, h: "h-[14px]" },
  { label: "Isochrones From Layer", level: 2, icon: <Rings />, selected: true },
];
const tailNodes: ToolNode[] = [
  { label: "Isochrones From Point", level: 2, icon: <Rings /> },
  { label: "Matrix", level: 1, h: "h-4" },
  { label: "SAGA", level: 0, icon: <Saga /> },
  { label: "Save Attributes", level: 0, icon: <SaveAttr /> },
  { label: "Scripts", level: 0, icon: <Python /> },
];

function ToolRow({ node }: { node: ToolNode }) {
  const pad = node.level === 0 ? "pl-[6px]" : node.level === 1 ? "pl-[26px]" : "pl-[62px]";
  return (
    <li className={`flex items-center whitespace-nowrap ${pad} ${node.h ?? "h-[18px]"} ${node.selected ? "bg-[#3399ff] text-white" : ""}`}>
      {node.level < 2 && <Arrow open={node.open} />}
      {node.icon && <span className={`flex w-[18px] shrink-0 justify-center ${node.level === 0 ? "ml-2" : ""}`}>{node.icon}</span>}
      <span className={node.level === 1 ? "ml-2" : "ml-[5px]"}>{node.label}</span>
    </li>
  );
}

const SearchIcon = () => (
  <Svg size="w-[13px] h-[13px]" box="0 0 13 13">
    <circle cx="5.500" cy="5" r="4.300" stroke="#8a8a8a" strokeWidth="1.200" />
    <path d="m8.500 8.300 4 4" stroke="#8a8a8a" strokeWidth="1.400" />
  </Svg>
);

function Toolbox() {
  return (
    <aside className="flex w-[248px] shrink-0 flex-col">
      <DockTitle title="Processing Toolbox" />
      <div className={dockTools} role="toolbar" aria-label="Toolbox tools">
        <SmallTool name="Models"><Gears menu /></SmallTool>
        <SmallTool name="Scripts"><Python menu /></SmallTool>
        <SmallTool name="History"><Clock size="w-4 h-4" /></SmallTool>
        <SmallTool name="Results"><Svg size="w-4 h-4" box="0 0 16 16"><path d="M2.500.500h8l3 3v12h-11z" fill="#f5f5f5" stroke="#999" /><path d="M4.500 5.500h7M4.500 8h7M4.500 10.500h7M4.500 13h7" stroke="#999" /></Svg></SmallTool>
        <Sep className="h-3 w-[6px]" />
        <SmallTool name="Edit in place"><Svg size="w-4 h-4" box="0 0 16 16"><path d="M1.500 1.500h10v10H7l-1 3-1-3H1.500z" fill="#fce94f" stroke="#c4a000" /><path d="m13.500 4-5 8-.5 3 2.500-1.500 5-8z" fill="#f2d760" stroke="#777" strokeWidth=".8" /></Svg></SmallTool>
        <Sep className="h-3 w-[6px]" />
        <SmallTool name="Options"><Wrench /></SmallTool>
      </div>
      <label className="flex h-[22px] shrink-0 items-center gap-2 rounded-[3px] border border-[#a9a9a9] bg-white pl-2">
        <SearchIcon />
        <input aria-label="Search tools" placeholder="Search..." className="w-full min-w-0 italic outline-none placeholder:text-[#b5b5b5]" />
      </label>
      <div className="flex min-h-0 flex-1 overflow-hidden border border-[#a9a9a9] bg-white">
        <ul className="min-w-0 flex-1 pt-px">
          {toolNodes.map((n) => <ToolRow key={n.label} node={n} />)}
          <li className="relative">
            <ul>{isoNodes.map((n) => <ToolRow key={n.label} node={n} />)}</ul>
            <span className="pointer-events-none absolute -top-[3px] right-[9px] -bottom-[4px] left-[20px] z-10 border-2 border-red-600" />
          </li>
          {tailNodes.map((n) => <ToolRow key={n.label} node={n} />)}
        </ul>
        <div className="flex w-[14px] shrink-0 flex-col border-l border-[#bcbcbc] bg-[#e6e6e6]">
          <ScrollEnd dir="up" className="h-[14px] border-b" />
          <div className="mt-[126px] flex-1 border-t border-[#bcbcbc] bg-[#f8f8f8]" />
          <ScrollEnd dir="down" className="h-[14px] border-t" />
        </div>
      </div>
    </aside>
  );
}

/* ---------- map ---------- */

// District shapes share one drawing space, three units to a map pixel.
const wards =
  "M212 27 235 34 262 44 280 58 296 72 298 103 316 107 345 101 360 114 362 130 364 146 354 158 358 168 378 182 400 192 412 196 420 222 422 240 440 258 470 285 497 310 503 335 530 330 556 343 576 328 585 308 592 290 640 280 655 290 642 312 627 330 630 372 646 382 648 374 660 374 658 398 672 417 646 427 648 448 636 474 644 490 618 512 620 530 617 541 590 540 566 575 576 592 572 608 578 640 562 648 545 640 532 680 553 722 543 750 560 782 574 800 572 818 562 842 600 865 640 870 690 868 696 852 688 842 695 840 720 855 745 835 780 828 778 815 787 808 810 815 840 828 862 860 884 915 836 962 818 990 812 1010 838 1015 836 1030 853 1035 848 1050 830 1065 825 1080 815 1078 808 1095 795 1100 785 1116 775 1112 768 1125 758 1120 752 1145 740 1138 725 1148 730 1170 715 1190 710 1205 695 1205 703 1180 690 1145 670 1125 672 1110 657 1085 690 1060 715 1042 690 1010 660 965 640 938 610 925 570 917 520 914 450 914 400 918 350 925 300 940 260 952 225 975 205 1000 190 1020 180 1055 185 1087 210 1105 228 1145 237 1190 225 1220 235 1235 218 1270 225 1300 245 1320 262 1335 230 1330 205 1305 165 1275 148 1260 145 1235 125 1210 118 1160 108 1115 95 1080 75 1070 50 1035 45 1012 75 995 80 970 95 930 90 895 70 893 45 875 32 862 40 848 65 840 70 810 100 780 110 765 115 710 128 670 150 655 185 675 215 682 232 668 250 632 247 590 235 560 222 520 208 485 200 440 188 412 192 350 182 330 165 285 147 258 138 247 115 248 105 225 92 215 95 195 75 172 73 155 95 140 98 120 130 82 165 85 190 72Z";

const orange = [
  "M245 130 272 140 302 146 295 165 275 190 262 192 255 205 222 236 208 230 208 208 240 180Z",
  "M217 86 230 80 243 84 247 98 232 96Z",
  "M287 122 297 122 297 133 287 131Z",
  "M266 193 277 190 277 204 266 202Z",
  "M191 352 214 338 208 365 200 372 205 385 212 408 208 438 196 425 188 410 195 395 198 372Z",
  "M208 482 218 492 240 484 280 490 292 502 298 535 315 524 320 545 304 560 300 580 285 575 262 560 250 560 232 532 212 500Z",
  "M250 572 262 600 285 575 304 580 304 620 270 650 295 640 296 670 318 680 318 735 340 750 340 808 240 812 220 800 188 795 195 765 218 745 228 725 195 712 160 730 135 722 125 765 108 763 112 705 130 665 150 655 165 672 205 678 230 682 245 665 252 605Z",
  "M65 820 90 815 105 826 132 822 132 835 110 850 112 868 95 880 82 892 75 870 80 852 66 838Z",
];
const green = [
  "M303 592 330 590 345 598 370 588 415 592 418 540 440 530 460 522 470 503 490 525 496 540 480 560 472 600 482 640 478 670 455 680 464 720 455 750 450 790 432 806 418 800 425 745 400 735 380 745 396 785 370 770 345 745 318 735 318 680 305 650Z",
  "M317 552 330 560 335 578 318 580 312 570Z",
  "M362 312 372 308 368 318 361 320Z",
  "M507 354 516 362 514 366Z",
  "M520 382 531 380 526 395 514 406 512 400Z",
  "M508 494 520 496 514 504ZM526 488 534 484 530 495Z",
];
const magenta = [
  "M487 528 510 525 508 545 532 548 530 522 562 522 560 545 577 575 568 600 545 610 535 640 520 662 492 665 484 640 473 600 480 562Z",
  "M484 630 535 630 535 655 508 665 508 672 498 680 524 690 522 705 500 700 480 690 472 672Z",
  "M480 705 522 700 522 740 540 782 555 780 565 780 575 815 560 845 535 840 510 825 485 822 470 780 475 740Z",
  "M458 735 464 740 460 782 452 785Z",
  "M342 750 370 775 400 795 418 803 418 808 340 810Z",
  "M428 812 452 812 456 828 432 835Z",
  "M452 835 485 832 480 858 454 862Z",
  "M555 870 565 845 590 860 620 870 605 905 575 922 555 915Z",
  "M485 885 550 885 530 902 490 905Z",
  "M640 885 660 870 715 890 740 920 735 945 770 970 792 980 775 1000 770 1025 740 1045 690 1062 712 1040 690 1010 650 950 640 930Z",
  "M688 1145 702 1170 704 1178 700 1178ZM655 1085 660 1085 660 1095 656 1095Z",
  "M480 832 512 850 510 862 488 855Z",
];
const red = [
  "M150 818 190 798 240 805 260 820 290 808 340 812 425 805 430 850 445 910 400 915 345 922 300 935 285 900 262 925 240 958 225 970 218 945 200 920 155 915 175 880 165 845Z",
  "M88 950 120 935 130 950 145 970 165 990 200 985 225 965 215 990 190 1005 170 1015 130 1010 95 1010 92 1040 78 1040 75 1020 46 1020 52 1000 75 998 118 985 110 965Z",
  "M143 1035 168 1030 180 1020 190 1035 180 1070 168 1060 145 1050Z",
  "M98 1078 130 1080 152 1100 160 1070 180 1085 200 1090 222 1120 238 1150 235 1175 225 1155 210 1115 185 1097 165 1105 140 1118 112 1112Z",
  "M162 1143 190 1168 220 1185 220 1193 200 1188 168 1162Z",
];

// Irregular street-block network used inside the collection areas.
function network(step: number, seed: number) {
  let s = seed;
  const rnd = () => ((s = (s * 16807) % 2147483647) / 2147483647 - 0.5) * step * 0.9;
  const cols = Math.ceil(920 / step);
  const rows = Math.ceil(900 / step);
  const pts = Array.from({ length: rows }, (_, r) =>
    Array.from({ length: cols }, (_, c) => [Math.round(c * step + rnd()), Math.round(480 + r * step + rnd())]),
  );
  let d = "";
  for (let r = 0; r < rows - 1; r++)
    for (let c = 0; c < cols - 1; c++) {
      const p = pts[r][c];
      if ((r * 7 + c * 5) % 6) d += `M${p} L${pts[r][c + 1]}`;
      if ((r * 3 + c * 11) % 7) d += `M${p} L${pts[r + 1][c]}`;
      if ((r * 5 + c * 3) % 4 === 0) d += `M${p} L${pts[r + 1][c + 1]}`;
    }
  return d;
}

function Zone({ id, parts, fill, line, step }: { id: string; parts: string[]; fill: string; line: string; step: number }) {
  const d = parts.join(" ");
  return (
    <g>
      <clipPath id={id}><path d={d} /></clipPath>
      <path d={d} fill={fill} stroke={line} strokeWidth="2.500" />
      <path d={network(step, step * 977)} clipPath={`url(#${id})`} stroke={line} strokeWidth="2" opacity=".75" />
    </g>
  );
}

const places: [string, number, number, number, number][] = [
  ["Atlantis", 392, 265.5, 400, 270],
  ["Kalbaskraal", 461, 260.5, 469, 264],
  ["Vissershok North", 416, 327, 424, 330],
  ["Kraaifontein", 496.5, 359.5, 504, 364],
  ["Athlone", 405, 413.5, 413, 418],
  ["Bellville", 460, 405.5, 467, 410],
  ["Swartklip", 460.5, 463.5, 467, 467],
  ["Helderberg", 522, 468.5, 528, 472],
  ["Coastal Park", 399.5, 485, 407, 488],
];

function star(cx: number, cy: number) {
  return Array.from({ length: 16 }, (_, i) => {
    const r = i % 2 ? 4.9 : 7.2;
    const a = (i * Math.PI) / 8;
    return `${(cx + r * Math.sin(a)).toFixed(1)},${(cy - r * Math.cos(a)).toFixed(1)}`;
  }).join(" ");
}

function MapCanvas() {
  return (
    <main className="min-w-0 flex-1 border border-[#a9a9a9] bg-white">
      <svg viewBox="246 168 433 459" className="h-full w-full" fill="none" role="img" aria-label="Refuse collection beats map">
        <defs>
          <radialGradient id="glow">
            <stop offset="0" stopColor="#fff" stopOpacity=".6" />
            <stop offset="1" stopColor="#fff" stopOpacity="0" />
          </radialGradient>
        </defs>
        <g transform="translate(310 170) scale(.33333)" strokeLinejoin="round">
          <path d={wards} fill="#b8b9b2" stroke="#8c8582" strokeWidth="2.500" />
          <path d="M92 502 100 495 116 500 120 520 122 535 108 540 98 530 90 515Z" fill="#b8b9b2" stroke="#8c8582" strokeWidth="2.500" />
          <path
            d="M147 258 157 218 192 258 210 232M405 195 362 265 342 305 333 335 325 360 320 410 322 520M192 350 240 312 265 303 273 320 273 370 285 400 290 460 298 500 295 580M285 398 300 370 323 358M298 103 315 108 326 130 305 145 290 142M335 520 340 542 362 565 395 548 418 552M362 568 370 590M335 545 312 580M145 770 165 740 200 725 225 740M75 805 130 812 150 820M120 850 140 885 155 920M108 830 120 870 115 905 140 950M80 990 150 1000M110 1010 150 1030 190 1020M125 765 140 750 148 775M430 845 520 880 640 885M440 880 500 895M418 805 450 830 560 850M770 1010 795 1000 810 1010 790 1030 836 1034M720 1000 740 990 770 1005M545 640 535 655M150 660 165 655 200 680M180 658 205 675"
            stroke="#8c8582"
            strokeWidth="2.500"
          />
          <Zone id="orange" parts={orange} fill="#f2b142" line="#bd8c3a" step={10} />
          <Zone id="green" parts={green} fill="#2edb6c" line="#2ea85b" step={12} />
          <Zone id="magenta" parts={magenta} fill="#ff00ff" line="#a51a9e" step={15} />
          <Zone id="red" parts={red} fill="#ed6b75" line="#b25d63" step={11} />
          <path d="M245 130 240 180 262 192M272 140 265 165 275 190M240 180 265 165" stroke="#bd8c3a" strokeWidth="2.500" />
          <path d="M290 812 340 818 372 870 368 895 345 912 318 905 300 870Z" fill="#ed6b75" stroke="#b25d63" strokeWidth="2.500" />
          <path d="M400 665 415 660 418 675 402 680ZM440 665 468 662 460 690 440 680ZM240 810 262 808 264 822 245 822ZM250 650 295 640 270 665ZM380 745 418 742 422 790 400 780ZM720 990 745 995 728 1015Z" fill="#b8b9b2" stroke="#8c8582" strokeWidth="1.500" />
        </g>
        {places.map(([n, x, y]) => <circle key={n} cx={x} cy={y} r="16" fill="url(#glow)" />)}
        {places.map(([n, x, y]) => <polygon key={n} points={star(x, y)} fill="#1b43e0" />)}
        <g className="font-['Open_Sans','Noto_Sans',sans-serif] text-[12px]" fill="#000" stroke="#fff" strokeWidth="3" strokeLinejoin="round" paintOrder="stroke">
          {places.map(([n, , , x, y]) => <text key={n} x={x} y={y}>{n}</text>)}
        </g>
        <g transform="translate(0 1)">
          <path d="M598 626c0-2-3-5-4-7-.6-1.500 1-2 2-.8l1.500 1.500V607c0-2 2.500-2 2.500 0v-2c0-2 2.700-2 2.700 0v1c0-2 2.600-2 2.600 0v1c.5-1.600 2.700-1.300 2.700.5v9c0 3-1.500 5-2 9.500z" fill="#fff" stroke="#111" strokeWidth="1.200" />
          <path d="M600 607v8M602.700 606v9M605.300 607v8" stroke="#111" />
        </g>
      </svg>
    </main>
  );
}

/* ---------- status bar ---------- */

function Spin({ id, value, width }: { id: string; value: string; width: string }) {
  return (
    <span className={`flex h-[21px] shrink-0 overflow-hidden rounded-[3px] border border-[#a9a9a9] bg-white ${width}`}>
      <input id={id} defaultValue={value} className="min-w-0 flex-1 pl-1 outline-none" />
      <span className="flex w-[14px] flex-col items-center justify-center gap-[3px] border-l border-[#bcbcbc] bg-[#f5f5f5]">
        <button aria-label="Increase"><Svg size="w-[7px] h-1" box="0 0 7 4"><path d="M0 4h7L3.500 0z" fill="#555" /></Svg></button>
        <button aria-label="Decrease"><Svg size="w-[7px] h-1" box="0 0 7 4"><path d="M0 0h7L3.500 4z" fill="#555" /></Svg></button>
      </span>
    </span>
  );
}

function StatusBar() {
  return (
    <footer className="flex h-[29px] shrink-0 items-center pt-px pl-1 whitespace-nowrap">
      <label className="flex h-[21px] w-[200px] shrink-0 items-center gap-[7px] rounded-[3px] border border-[#a9a9a9] bg-white pl-2">
        <SearchIcon />
        <input aria-label="Locate" placeholder="Type to locate (Ctrl+K)" className="w-full min-w-0 outline-none placeholder:text-[#808080]" />
      </label>
      <label htmlFor="coord" className="ml-9 w-[9px]">d</label>
      <input id="coord" defaultValue="2112062,-4073554" className="h-[21px] w-[107px] shrink-0 rounded-[3px] border border-[#a9a9a9] bg-white px-[6px] outline-none" />
      <button aria-label="Toggle extents" className="ml-[4px]">
        <Svg size="w-4 h-4" box="0 0 16 16"><path d="M1 4.500 4 1l4 3 2 4-4 3-3-3z" fill="#222" /><path d="m5 9 3-3 5 3 1 4-4 2.500-4-2z" fill="#fff" stroke="#222" strokeWidth="1.200" /><path d="m2.500 5 3-2.500M4 7l4-3" stroke="#ddd" strokeWidth="1.100" /><path d="M7 11.500l3-3.500M9 13.500l3-4M9 4l3-2M11 6l4-2M13 2l2-1" stroke="#555" strokeWidth="1.100" /></Svg>
      </button>
      <label htmlFor="scale" className="ml-[12px] w-[8px]">a</label>
      <span className="grid h-[21px] w-[80px] shrink-0 overflow-hidden rounded-[3px] border border-[#a9a9a9] bg-white">
        <select id="scale" className="h-[19px] w-full appearance-none pl-[3px] outline-none [grid-area:1/1]"><option>1:1029643</option></select>
        <span className="pointer-events-none flex w-5 items-center justify-center justify-self-end border-l border-[#bcbcbc] bg-[#f5f5f5] [grid-area:1/1]"><Arrow open /></span>
      </span>
      <button aria-label="Lock scale" className="ml-[11px]">
        <Svg size="w-4 h-4" box="0 0 16 16"><path d="M4.500 8V4.500a3.500 3.500 0 0 1 7 0V8" stroke="#8a8a8a" strokeWidth="1.800" /><rect x="2" y="7" width="12" height="8" rx="1" fill="#4d4d4d" /></Svg>
      </button>
      <label htmlFor="magnifier" className="ml-[6px] w-[8px]">n</label>
      <Spin id="magnifier" value="100%" width="w-[87px]" />
      <label htmlFor="rotation" className="ml-[8px] w-[15px]">a</label>
      <Spin id="rotation" value="0.0 °" width="w-[84px]" />
      <span className="ml-[6px] flex items-center gap-1"><Check label="Render" on /><span>Render</span></span>
      <button className="ml-4 flex items-center gap-[3px]">
        <Svg size="w-4 h-4" box="0 0 16 16"><path d="M8 1C4 3 2 5 .5 8 2 11 4 13 8 15c4-2 6-4 7.500-7C14 5 12 3 8 1z" fill="#e4e4e4" stroke="#777" /><path d="M3 5h10M.500 8h15M3 11h10M8 1v14M8 1C4 4 4 12 8 15M8 1c4 3 4 11 0 14" stroke="#777" /></Svg>
        <span>EPSG:3857</span>
      </button>
      <button aria-label="Messages" className="mr-[18px] ml-auto">
        <Svg size="w-4 h-4" box="0 0 16 16"><path d="M8 1.500c5 0 8 2 8 5.200s-2 4.800-5 5.300c0 1.500 1 2 2 2.500-3 0-4-1-5-2.300-5 0-8-2-8-5.500S3 1.500 8 1.500z" fill="#555" /><path d="M3.500 6.500h2M7 6.500h2M10.500 6.500h2" stroke="#fff" strokeWidth="1.800" /></Svg>
      </button>
      <Svg size="w-3 h-3" box="0 0 12 12"><path d="M9 2h1M9 5h1M6 5h1M9 8h1M6 8h1M3 8h1M9 11h1M6 11h1M3 11h1M0 11h1" stroke="#aaa" /></Svg>
    </footer>
  );
}

/* ---------- window ---------- */

const menus: [string, string, string][] = [
  ["Pro", "j", "ect"], ["", "E", "dit"], ["", "V", "iew"], ["", "L", "ayer"], ["", "S", "ettings"], ["", "P", "lugins"], ["Vect", "o", "r"],
  ["", "R", "aster"], ["", "D", "atabase"], ["", "W", "eb"], ["", "M", "esh"], ["Pro", "c", "essing"], ["", "H", "elp"],
];

export default function App() {
  return (
    <div className="flex h-screen w-full flex-col overflow-hidden rounded-t-lg rounded-b-md border border-[#1f2733] bg-[#b9dafa] px-[6px] pb-[6px] font-['Open_Sans','Noto_Sans',sans-serif] text-[11px] leading-[14px] text-black">
      <header className="flex h-7 shrink-0 items-start bg-linear-to-r from-[#dcecfb] via-[#b3d5f7] to-[#c9e2fc]">
        <div className="flex h-full items-center gap-[5px] pl-px">
          <QLogo />
          <h1>service_area — QGIS | 3.16.0-Hannover</h1>
        </div>
        <div className="ml-auto flex h-[19px] overflow-hidden rounded-b-[4px] border border-t-0 border-[#4d5f78]">
          <button aria-label="Minimize" className="flex w-7 items-center justify-center border-r border-[#4d5f78] bg-linear-to-b from-[#dbe6f3] via-[#b4c6dc] to-[#c7d8ea]">
            <span className="mt-[5px] h-[5px] w-3 rounded-[1px] border border-[#53627a] bg-white" />
          </button>
          <button aria-label="Maximize" className="flex w-[27px] items-center justify-center border-r border-[#4d5f78] bg-linear-to-b from-[#dbe6f3] via-[#b4c6dc] to-[#c7d8ea]">
            <Svg size="w-3 h-[10px]" box="0 0 12 10"><path d="M.500.500h11v9H.500zM4 3.500h4v3H4z" fill="#fff" fillRule="evenodd" stroke="#53627a" /></Svg>
          </button>
          <button aria-label="Close" className="flex w-[46px] items-center justify-center bg-linear-to-b from-[#e3a99c] via-[#c4442c] to-[#d4705a]">
            <Svg size="w-3 h-[11px]" box="0 0 12 11"><path d="m2 1.500 8 8M10 1.500l-8 8" stroke="#5a3230" strokeWidth="4" /><path d="m2 1.500 8 8M10 1.500l-8 8" stroke="#fff" strokeWidth="2.400" /></Svg>
          </button>
        </div>
      </header>
      <div className="flex min-h-0 flex-1 flex-col border border-[#5b6b80] bg-[#f0f0f0]">
        <nav className="flex h-5 shrink-0 items-center gap-[15px] border-b border-[#d0d0d0] pl-[10px]">
          {menus.map(([a, b, c]) => (
            <button key={a + b + c} className="whitespace-nowrap">{a}<u>{b}</u>{c}</button>
          ))}
        </nav>
        <ProjectBar />
        <LayerBar />
        <SelectionBar />
        <div className="flex min-h-0 flex-1">
          <div className="flex w-[231px] shrink-0 flex-col">
            <Browser />
            <span className="mx-auto mt-[2px] mb-[3px] h-px w-4 shrink-0 border-t border-dotted border-[#aaa]" />
            <Layers />
          </div>
          <span className="w-[6px] shrink-0" />
          <MapCanvas />
          <span className="w-[6px] shrink-0" />
          <Toolbox />
        </div>
        <StatusBar />
      </div>
    </div>
  );
}
